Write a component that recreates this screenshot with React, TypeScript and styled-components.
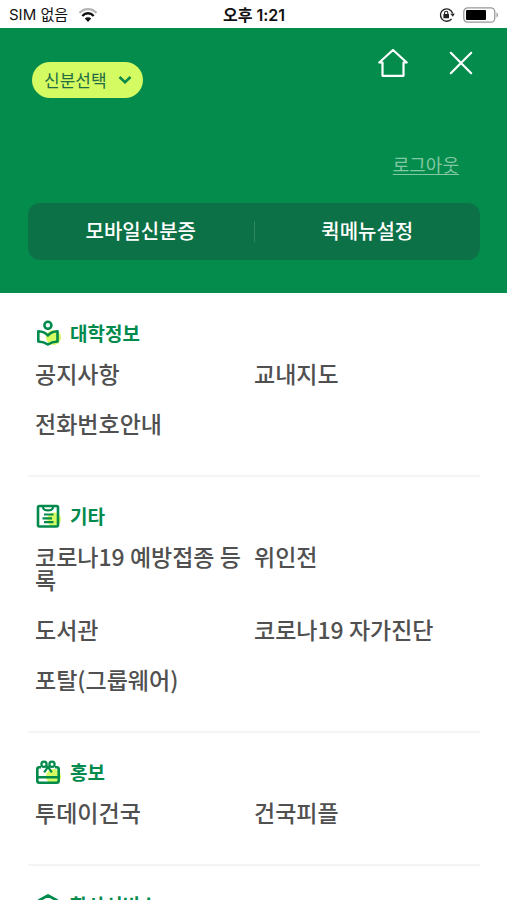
import React from "react";
import styled, { createGlobalStyle, css } from "styled-components";

const GlobalStyle = createGlobalStyle`
  *, *::before, *::after { box-sizing: border-box; }
  body {
    margin: 0;
    background: #fff;
    color: #505050;
    font-family: "Noto Sans CJK KR", "Noto Sans", sans-serif;
  }
  button { font-family: inherit; border: 0; padding: 0; cursor: pointer; }
  a { color: inherit; }
`;

const green = "#048c4c";
const headingGreen = "#008a4b";
const lime = "#d5fb62";

const Screen = styled.div`
  display: flex;
  flex-direction: column;
  height: 100vh;
  overflow: hidden;
`;

const StatusBar = styled.div`
  display: grid;
  grid-template-columns: 1fr auto 1fr;
  align-items: center;
  flex: none;
  height: 28px;
  padding: 2px 8px 0 9px;
  color: #111;
  font-family: Inter, "Noto Sans CJK KR", sans-serif;
  font-size: 15px;
  line-height: 24px;
`;

const StatusGroup = styled.div<{ $end?: boolean }>`
  display: flex;
  align-items: center;
  gap: 10px;
  ${(p) => p.$end && css`gap: 8px; justify-content: flex-end;`}
`;

const Clock = styled.time`
  font-size: 16px;
  font-weight: 600;
`;

const Header = styled.header`
  flex: none;
  padding: 16px 27px 33px 28px;
  background: ${green};
  color: #fff;
`;

const TopRow = styled.div`
  display: flex;
  justify-content: space-between;
  align-items: flex-start;
  padding-left: 4px;
`;

const IdentityButton = styled.button`
  display: flex;
  align-items: center;
  gap: 11px;
  height: 36px;
  margin-top: 18px;
  padding: 0 11px 0 12px;
  border-radius: 18px;
  background: ${lime};
  color: #236b43;
  font-size: 17px;
  line-height: 24px;
`;

const HeaderActions = styled.div`
  display: flex;
  gap: 30px;
`;

const IconButton = styled.button`
  display: grid;
  place-items: center;
  width: 38px;
  height: 38px;
  background: transparent;
  color: #fff;
`;

const LogoutRow = styled.div`
  display: flex;
  justify-content: flex-end;
  margin-top: 53px;
  padding-right: 21px;
`;

const Logout = styled.a`
  color: #83c8a4;
  font-size: 18px;
  line-height: 26px;
  text-underline-offset: 2px;
  text-decoration-thickness: 1px;
`;

const QuickBar = styled.nav`
  display: flex;
  align-items: center;
  height: 57px;
  margin-top: 26px;
  border-radius: 12px;
  background: #0c7147;
`;

const QuickButton = styled.button`
  flex: 1;
  height: 100%;
  padding-bottom: 2px;
  background: transparent;
  color: #fff;
  font-size: 20px;
  font-weight: 500;
  line-height: 28px;
`;

const QuickDivider = styled.span`
  width: 1px;
  height: 21px;
  background: #2f8862;
`;

const Menu = styled.main`
  flex: 1;
  min-height: 0;
  padding: 1px 27px 0 28px;
  overflow-y: auto;
  scrollbar-width: none;
`;

const Section = styled.section`
  padding: 26px 7px 40px;
  border-bottom: 2px solid #f4f4f4;
`;

const SectionHeading = styled.h2`
  display: flex;
  align-items: center;
  gap: 9px;
  margin: 0 0 16px;
  color: ${headingGreen};
  font-size: 19px;
  font-weight: 700;
  line-height: 26px;
`;

const ItemGrid = styled.ul`
  display: grid;
  grid-template-columns: 1fr 1fr;
  row-gap: 27px;
  margin: 0;
  padding: 0;
  list-style: none;
`;

const ItemLink = styled.a`
  display: block;
  font-size: 23px;
  font-weight: 500;
  line-height: 23px;
  text-decoration: none;
  word-break: break-all;
`;

const WifiIcon = () => (
  <svg width="20" height="15" viewBox="0 0 20 15" fill="none" aria-hidden="true">
    <path d="M1.500 5C6-.2 14-.2 18.500 5" stroke="#b5b5b5" strokeWidth="2.200" />
    <path d="M4.300 8c3.200-3.600 8.200-3.600 11.400 0" stroke="#111" strokeWidth="2.400" />
    <path d="M10 14 6.800 10.600c1.800-1.800 4.600-1.800 6.400 0z" fill="#111" />
  </svg>
);

const RotationLockIcon = () => (
  <svg width="16" height="16" viewBox="0 0 16 16" fill="none" aria-hidden="true">
    <path d="M12.600 11.800A6.200 6.200 0 1 1 13.600 6.300" stroke="#222" strokeWidth="1.300" />
    <path d="m11.300 6.800 4.500-.2-1.900 3.200z" fill="#222" />
    <rect x="4.400" y="7" width="5.600" height="4.200" rx=".5" fill="#222" />
    <path d="M5.600 7.200V5.800a1.600 1.600 0 0 1 3.200 0v1.400" stroke="#222" strokeWidth="1.100" />
  </svg>
);

const BatteryIcon = () => (
  <svg width="36" height="16" viewBox="0 0 36 16" fill="none" aria-hidden="true">
    <rect x=".8" y=".8" width="31" height="14.400" rx="4" stroke="#999" strokeWidth="1.300" />
    <rect x="3" y="3" width="20" height="10" rx="1" fill="#000" />
    <path d="M33.500 5.500c2 .6 2 4.400 0 5z" fill="#999" />
  </svg>
);

const ChevronIcon = () => (
  <svg width="14" height="10" viewBox="0 0 14 10" fill="none" aria-hidden="true">
    <path d="m1.500 2 5.500 5.300L12.500 2" stroke="#0a8a48" strokeWidth="2.600" />
  </svg>
);

const HomeIcon = () => (
  <svg width="30" height="30" viewBox="0 0 30 30" fill="none" stroke="currentColor" strokeWidth="2.200" strokeLinejoin="round" strokeLinecap="round" aria-hidden="true">
    <path d="M4.500 14.500v13.300h21V14.500M1.300 14.500h3.200M25.500 14.500h3.200M1.300 14.500 15 2l13.700 12.500" />
  </svg>
);

const CloseIcon = () => (
  <svg width="24" height="24" viewBox="0 0 24 24" fill="none" stroke="currentColor" strokeWidth="2.200" strokeLinecap="round" aria-hidden="true">
    <path d="m1.800 1.800 20.400 20.400M22.200 1.800 1.800 22.200" />
  </svg>
);

const SectionSvg = ({ children }: { children: React.ReactNode }) => (
  <svg width="26" height="26" viewBox="0 0 26 26" fill="none" stroke={headingGreen} strokeWidth="2.600" strokeLinejoin="round" aria-hidden="true">
    {children}
  </svg>
);

const ReaderIcon = () => (
  <SectionSvg>
    <circle cx="18.500" cy="17.500" r="7.500" fill={lime} stroke="none" />
    <circle cx="12.900" cy="5.300" r="3.500" />
    <path d="M12.900 15.500C10.500 12.800 7 11.500 3.300 11.300v10.200c3.700.2 7 1.200 9.600 3 2.600-1.800 5.900-2.800 9.600-3V11.300c-3.700.2-7.200 1.500-9.600 4.200Z" />
  </SectionSvg>
);

const ClipboardIcon = () => (
  <SectionSvg>
    <circle cx="19" cy="16.500" r="7" fill={lime} stroke="none" />
    <rect x="3" y="3" width="20" height="20.500" rx="1.500" />
    <path d="M7.800 3.500c.3 3 1.700 3.900 5.200 3.900s4.900-.9 5.200-3.900M9 11.500h9.500M7.500 15.300h9.500M9 19.200h9.500" strokeWidth="2.200" />
  </SectionSvg>
);

const GiftIcon = () => (
  <SectionSvg>
    <circle cx="18.500" cy="17.500" r="7.500" fill={lime} stroke="none" />
    <path d="M6 8.300H4.300a2 2 0 0 0-2 2v11.400a2 2 0 0 0 2 2h17.400a2 2 0 0 0 2-2V10.300a2 2 0 0 0-2-2H20M2.300 18.200h21.400" />
    <circle cx="9" cy="5.300" r="2.600" strokeWidth="2.200" />
    <circle cx="17" cy="5.300" r="2.600" strokeWidth="2.200" />
    <path d="m11 7 2 1.200L15 7M13 7.800l-3.800 5.600M13 7.800l3.800 5.600" strokeWidth="2.200" />
  </SectionSvg>
);

const ServiceIcon = () => (
  <SectionSvg>
    <circle cx="18" cy="17" r="7.500" fill={lime} stroke="none" />
    <path d="m13 3.500 9 5v9.800l-9 5.200-9-5.200V8.500z" />
    <path d="m4 8.500 9 5 9-5M13 13.500v10" />
  </SectionSvg>
);

const sections = [
  { title: "대학정보", Icon: ReaderIcon, items: ["공지사항", "교내지도", "전화번호안내"] },
  {
    title: "기타",
    Icon: ClipboardIcon,
    items: ["코로나19 예방접종 등록", "위인전", "도서관", "코로나19 자가진단", "포탈(그룹웨어)"],
  },
  { title: "홍보", Icon: GiftIcon, items: ["투데이건국", "건국피플"] },
  { title: "학사서비스", Icon: ServiceIcon, items: [] },
];

export default function App() {
  return (
    <>
      <GlobalStyle />
      <Screen>
        <StatusBar>
          <StatusGroup>
            <span>SIM 없음</span>
            <WifiIcon />
          </StatusGroup>
          <Clock>오후 1:21</Clock>
          <StatusGroup $end>
            <RotationLockIcon />
            <BatteryIcon />
          </StatusGroup>
        </StatusBar>
        <Header>
          <TopRow>
            <IdentityButton type="button">
              신분선택
              <ChevronIcon />
            </IdentityButton>
            <HeaderActions>
              <IconButton type="button" aria-label="홈">
                <HomeIcon />
              </IconButton>
              <IconButton type="button" aria-label="닫기">
                <CloseIcon />
              </IconButton>
            </HeaderActions>
          </TopRow>
          <LogoutRow>
            <Logout href="#logout">로그아웃</Logout>
          </LogoutRow>
          <QuickBar>
            <QuickButton type="button">모바일신분증</QuickButton>
            <QuickDivider />
            <QuickButton type="button">퀵메뉴설정</QuickButton>
          </QuickBar>
        </Header>
        <Menu>
          {sections.map(({ title, Icon, items }) => (
            <Section key={title}>
              <SectionHeading>
                <Icon />
                {title}
              </SectionHeading>
              <ItemGrid>
                {items.map((item) => (
                  <li key={item}>
                    <ItemLink href="#menu">{item}</ItemLink>
                  </li>
                ))}
              </ItemGrid>
            </Section>
          ))}
        </Menu>
      </Screen>
    </>
  );
}
